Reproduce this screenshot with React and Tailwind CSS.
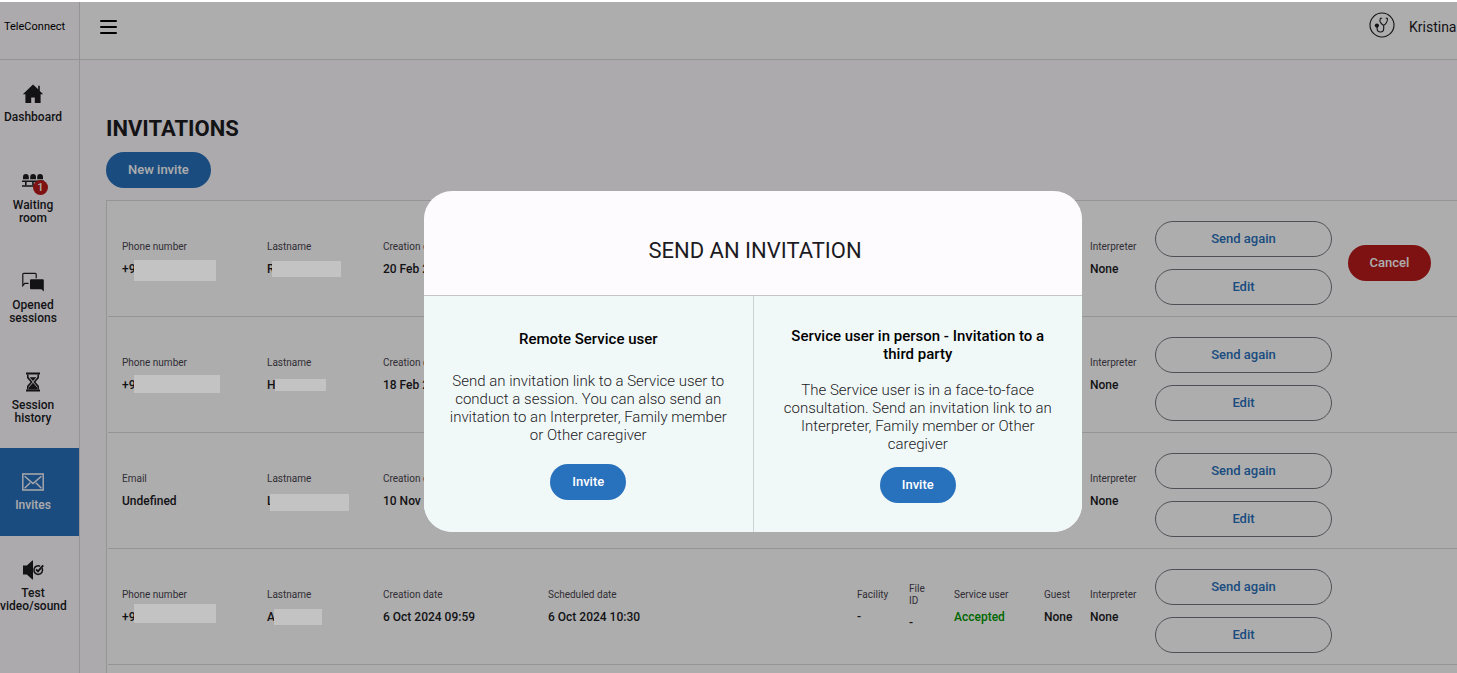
import React from 'react';

const WAITING_COUNT = 1;

function HomeIcon() {
  return (
    <svg width="22" height="22" viewBox="0 0 22 22" fill="currentColor" aria-hidden="true">
      <path d="M11 1.5 0.8 11.2h2.600v8.800h5.800v-5.400h3.600v5.400h5.800v-8.800h2.600l-3.400-3.300V2.800h-1.600v3.500z" />
    </svg>
  );
}

function WaitingIcon() {
  return (
    <svg width="24" height="22" viewBox="0 0 24 22" fill="currentColor" aria-hidden="true">
      <path d="M2 8.2V6a2.8 2.8 0 0 1 5.8 0v2.2zM9.2 8.2V6A2.8 2.8 0 0 1 15 6v2.2zM16.2 8.2V6A2.8 2.8 0 0 1 22 6v2.2z" />
      <path d="M1 9.4h22v1.5H1zM1 14.2h22v1.6H1z" />
      <path d="M4 10.9h1.6v3.4H4zM11.2 10.9h1.6v3.4h-1.6zM18.4 10.9H20v3.4h-1.6z" />
    </svg>
  );
}

function ChatIcon() {
  return (
    <svg width="22" height="22" viewBox="0 0 22 22" aria-hidden="true">
      <path d="M6.6 12.4H2.8L.8 14.6V3.2a.9.9 0 0 1 .9-.9h11.6a.9.9 0 0 1 .9.9v4" fill="none" stroke="currentColor" strokeWidth="1.2" />
      <path d="M9 8.2h11.8a1 1 0 0 1 1 1v11.3l-2.4-2.3H9a1 1 0 0 1-1-1v-8a1 1 0 0 1 1-1z" fill="currentColor" />
    </svg>
  );
}

function HourglassIcon() {
  return (
    <svg width="22" height="22" viewBox="0 0 22 22" aria-hidden="true">
      <path d="M4 1.6h14v2H4zM4 18.4h14v2H4z" fill="currentColor" />
      <path d="M5.8 3.6v3l3.8 4.4-3.8 4.4v3M16.2 3.6v3L12.4 11l3.8 4.4v3" fill="none" stroke="currentColor" strokeWidth="1.6" />
      <path d="M7.6 6.2h6.8L11 10zM11 11.8l4.2 4.6v2H6.8v-2z" fill="currentColor" />
    </svg>
  );
}

function MailIcon() {
  return (
    <svg width="22" height="22" viewBox="0 0 22 22" fill="none" stroke="currentColor" strokeWidth="1.4" aria-hidden="true">
      <path d="M.8 3h20.4v16H.8z" />
      <path d="M2.6 5.2 11 12.6l8.400-7.400M2.6 17.2l5.600-5.400M19.4 17.2l-5.600-5.400" />
    </svg>
  );
}

function SpeakerCheckIcon() {
  return (
    <svg width="22" height="22" viewBox="0 0 22 22" aria-hidden="true">
      <path d="M1 6.5h3.8L10.4 1.4h.6v19.2h-.6L4.8 15.5H1z" fill="currentColor" />
      <path d="M20.1 9.200a4.300 4.300 0 1 1-2-2" fill="none" stroke="currentColor" strokeWidth="1.5" />
      <path d="m14 10.4 2 2L21.200 6.400" fill="none" stroke="currentColor" strokeWidth="2" />
    </svg>
  );
}

function StethoscopeAvatar() {
  return (
    <svg width="26" height="26" viewBox="0 0 26 26" fill="none" stroke="currentColor" aria-hidden="true">
      <circle cx="13" cy="13" r="12" strokeWidth="1.1" />
      <path d="M13.2 6.2h-1.8c-.9 1.6-.5 3.4.6 4.9.8 1.1 1.7 1.900 2.600 2.200.9-.4 2-1.400 2.800-2.600 1-1.500 1.500-3 .9-4.500h-1.700" strokeWidth="1.1" />
      <path d="M14.7 13.3v3.200c0 2-1.200 3.500-3.200 3.500s-3.400-1.400-3.400-3.400v-1.800" strokeWidth="1.1" />
      <circle cx="7.9" cy="13.6" r="2.1" fill="currentColor" stroke="none" />
    </svg>
  );
}

const NAV = [
  { label: 'Dashboard', Icon: HomeIcon },
  { label: 'Waiting room', Icon: WaitingIcon, badge: WAITING_COUNT },
  { label: 'Opened sessions', Icon: ChatIcon },
  { label: 'Session history', Icon: HourglassIcon },
  { label: 'Invites', Icon: MailIcon, active: true },
  { label: 'Test video/sound', Icon: SpeakerCheckIcon },
];

const INVITES = [
  {
    contact: { label: 'Phone number', text: '+9', cut: 'w-3', mask: 'mt-[3px] w-[82px] h-[21px]' },
    name: { text: 'R', cut: 'w-[5px]', mask: 'w-[69px] h-4' },
    created: '20 Feb 2025 10:12',
    scheduled: '20 Feb 2025 10:30',
    cancel: true,
  },
  {
    contact: { label: 'Phone number', text: '+9', cut: 'w-3', mask: 'mb-0.5 w-[86px] h-[18px]' },
    name: { text: 'H', cut: 'w-2', mask: 'w-[51px] h-3' },
    created: '18 Feb 2025 09:40',
    scheduled: '18 Feb 2025 10:00',
  },
  {
    contact: { label: 'Email', text: 'Undefined' },
    name: { text: 'L', cut: 'w-[3px]', mask: 'mt-[3px] w-[79px] h-[17px]' },
    created: '10 Nov 2024 09:30',
    scheduled: '10 Nov 2024 10:00',
  },
  {
    contact: { label: 'Phone number', text: '+9', cut: 'w-3', mask: 'mb-1.5 w-[82px] h-[19px]' },
    name: { text: 'A', cut: 'w-[7px]', mask: 'w-[48px] h-4' },
    created: '6 Oct 2024 09:59',
    scheduled: '6 Oct 2024 10:30',
  },
];

const OPTIONS = [
  {
    title: 'Remote Service user',
    text: 'Send an invitation link to a Service user to conduct a session. You can also send an invitation to an Interpreter, Family member or Other caregiver',
    titleGap: 'mb-6',
    textGap: 'mb-5',
  },
  {
    title: 'Service user in person - Invitation to a third party',
    text: 'The Service user is in a face-to-face consultation. Send an invitation link to an Interpreter, Family member or Other caregiver',
    titleGap: 'mb-[18px]',
    textGap: 'mb-3.5',
  },
];

function NavItem({ label, Icon, badge, active }) {
  return (
    <li>
      <a
        href="#"
        className={
          'flex min-h-[88px] flex-col items-center gap-1.5 py-[23px] pr-[13px] text-center text-xs leading-[13px] font-medium ' +
          (active ? 'bg-[#2871bc] text-[#fefbff]' : 'text-[#1c1b1f]')
        }
      >
        <span className="relative h-[22px]">
          <Icon />
          {badge && (
            <span className="absolute -right-[3px] -bottom-0.5 flex size-[15px] items-center justify-center rounded-full bg-[#ba1a1a] text-[11px] leading-none text-white">
              {badge}
            </span>
          )}
        </span>
        <span className="w-[66px]">{label}</span>
      </a>
    </li>
  );
}

function Field({ label, text, cut, mask, tone = 'text-[#1c1b1f]' }) {
  return (
    <div className="flex flex-col gap-2">
      <dt className="text-[10px] leading-3 text-[#49454f]">{label}</dt>
      <dd className={'flex h-4 items-center text-xs leading-4 font-medium whitespace-nowrap ' + tone}>
        {mask ? (
          <>
            <span className={cut}>{text}</span>
            <span className={'relative z-20 shrink-0 bg-[#c3c3c3] ' + mask} />
          </>
        ) : (
          text
        )}
      </dd>
    </div>
  );
}

function OutlineButton({ children }) {
  return (
    <button type="button" className="h-9 w-full rounded-full border border-[#79747e] text-[13px] font-medium text-[#2871bc]">
      {children}
    </button>
  );
}

function InviteRow({ invite }) {
  return (
    <li className="ml-px flex min-h-[116px] items-center border-b border-[#dcdcdc] pl-3.5">
      <dl className="grid flex-1 grid-cols-[145px_116px_165px_1fr_52px_45px_90px_46px_65px] items-center">
        <Field {...invite.contact} />
        <Field label="Lastname" {...invite.name} />
        <Field label="Creation date" text={invite.created} />
        <Field label="Scheduled date" text={invite.scheduled} />
        <Field label="Facility" text="-" />
        <Field label={<span className="block w-5">File ID</span>} text="-" />
        <Field label="Service user" text="Accepted" tone="text-[#009a00]" />
        <Field label="Guest" text="None" />
        <Field label="Interpreter" text="None" />
      </dl>
      <div className="flex w-[302px] shrink-0 items-center gap-4 pt-2">
        <div className="flex w-[177px] flex-col gap-3">
          <OutlineButton>Send again</OutlineButton>
          <OutlineButton>Edit</OutlineButton>
        </div>
        {invite.cancel && (
          <button type="button" className="h-9 w-[83px] rounded-full bg-[#ba1a1a] text-[13px] font-medium text-white">
            Cancel
          </button>
        )}
      </div>
    </li>
  );
}

function InviteOption({ title, text, titleGap, textGap }) {
  return (
    <section className="flex flex-1 flex-col items-center justify-center px-6 pt-0.5 text-center">
      <h3 className={'text-[15px] leading-[18px] font-medium text-black ' + titleGap}>{title}</h3>
      <p className={'text-[15px] leading-[18px] font-light text-[#1c1b1f] ' + textGap}>{text}</p>
      <button type="button" className="h-9 rounded-full bg-[#2871bc] px-[22px] text-[13px] font-medium text-white">
        Invite
      </button>
    </section>
  );
}

export default function App() {
  return (
    <div className="h-screen bg-white pt-0.5 font-[Roboto,sans-serif]">
      <div className="relative flex h-full overflow-hidden bg-[#fefbff]">
        <aside className="w-20 shrink-0 border-r border-[#dcd9dd]">
          <div className="flex h-[58px] items-center border-b border-[#dcd9dd] pb-1.5 pl-1">
            <span className="text-[11px] text-black">TeleConnect</span>
          </div>
          <nav>
            <ul>
              {NAV.map((item) => (
                <NavItem key={item.label} {...item} />
              ))}
            </ul>
          </nav>
        </aside>

        <div className="flex min-w-0 flex-1 flex-col">
          <header className="flex h-[58px] shrink-0 items-center justify-between border-b border-[#dcd9dd] bg-white pb-2 pl-5">
            <button type="button" aria-label="Menu" className="text-black">
              <svg width="17" height="14" viewBox="0 0 17 14" stroke="currentColor" strokeWidth="2" strokeLinecap="round" aria-hidden="true">
                <path d="M1 1h15M1 7h15M1 13h15" />
              </svg>
            </button>
            <div className="flex w-[88px] items-center gap-3.5 text-[#1c1b1f]">
              <span className="shrink-0 pb-1">
                <StethoscopeAvatar />
              </span>
              <span className="text-sm whitespace-nowrap">Kristina</span>
            </div>
          </header>

          <main className="flex flex-1 flex-col items-start pt-[54px] pl-[26px]">
            <h1 className="text-[22px] leading-[30px] font-bold text-[#1c1b1f]">INVITATIONS</h1>
            <button type="button" className="mt-2 h-9 rounded-full bg-[#2871bc] px-[22px] text-[13px] font-medium text-white">
              New invite
            </button>
            <ul className="mt-3 w-full flex-1 border-t border-l border-[#dcdcdc] bg-white">
              {INVITES.map((invite) => (
                <InviteRow key={invite.created} invite={invite} />
              ))}
            </ul>
          </main>
        </div>

        <div className="absolute inset-0 z-10 bg-black/32" />
        <div className="absolute inset-0 z-30 flex items-center justify-center pt-12 pl-[49px]">
          <div role="dialog" aria-modal="true" aria-labelledby="invite-title" className="w-[658px] overflow-hidden rounded-[28px] bg-[#fefbff]">
            <h2 id="invite-title" className="border-b border-[#c4c4c4] pt-[46px] pb-[30px] pl-1 text-center text-[22px] leading-7 text-[#1c1b1f]">
              SEND AN INVITATION
            </h2>
            <div className="flex min-h-[236px] divide-x divide-[#cfd2d2] bg-[#f1f8f8]">
              {OPTIONS.map((option) => (
                <InviteOption key={option.title} {...option} />
              ))}
            </div>
          </div>
        </div>
      </div>
    </div>
  );
}
